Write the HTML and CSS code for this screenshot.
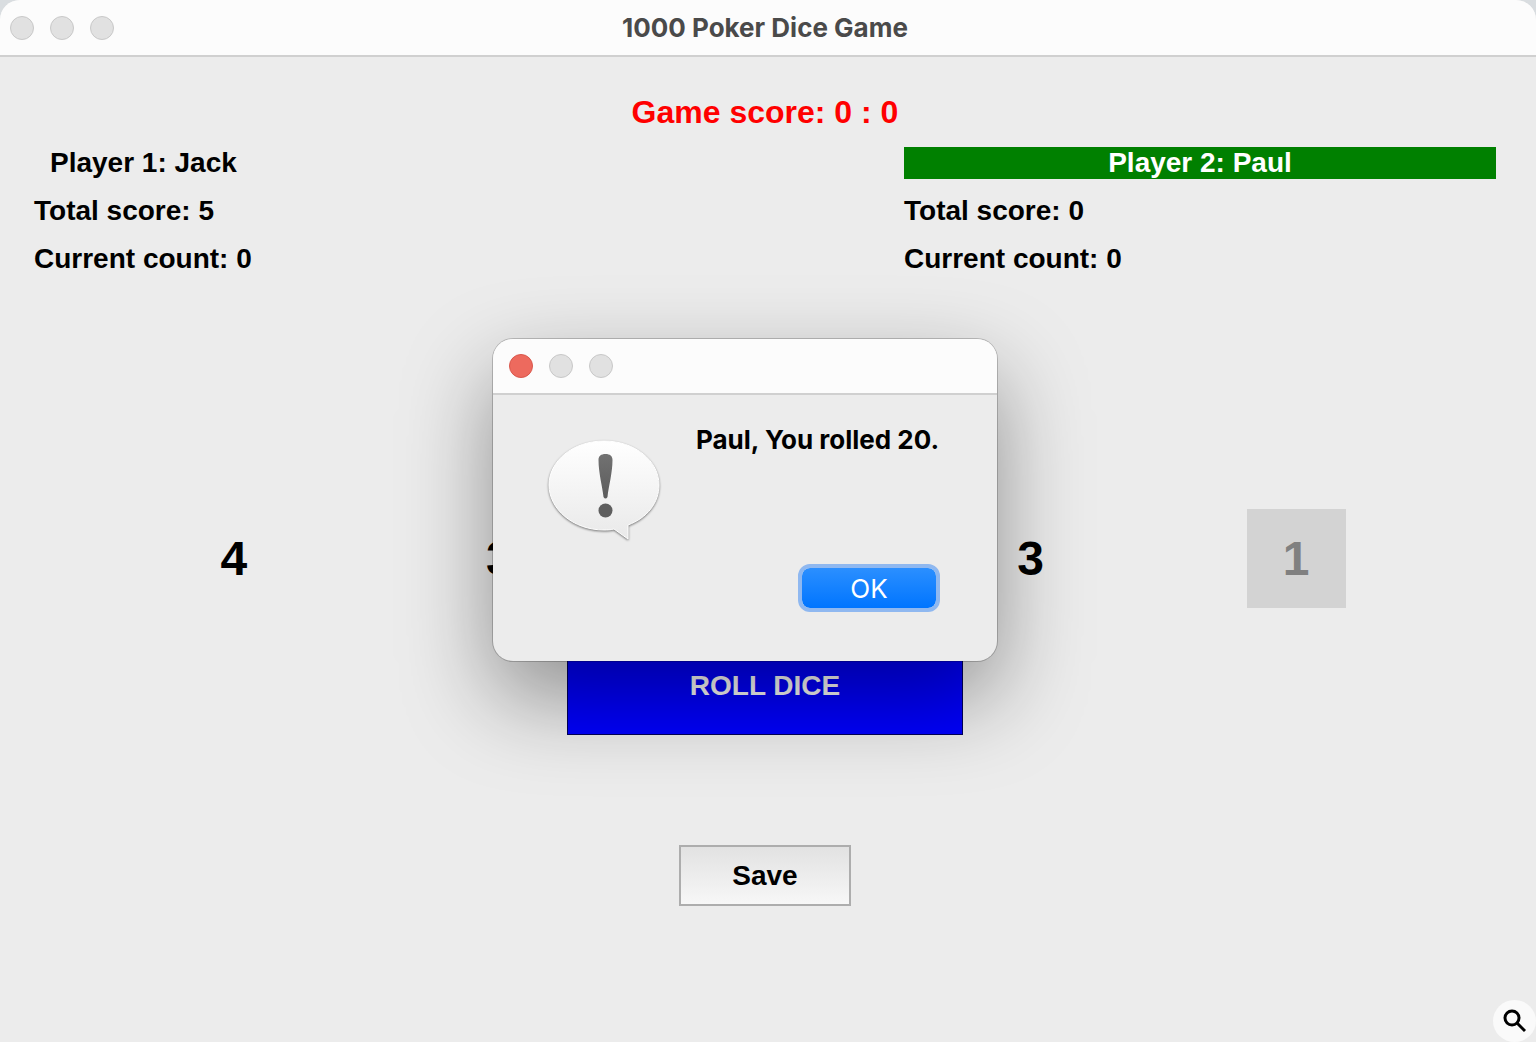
FILE: index.html
```html
<!DOCTYPE html>
<html lang="en">
<head>
  <meta charset="UTF-8" />
  <title>1000 Poker Dice Game</title>
  <link rel="stylesheet" href="styles.css">
</head>
<body>

  <div class="window">
    <!-- Title bar -->
    <header class="title-bar">
      <div class="lights">
        <span class="light"></span>
        <span class="light"></span>
        <span class="light"></span>
      </div>
      <h1>1000 Poker Dice Game</h1>
    </header>

    <main class="game">
      <p class="game-score">Game score: 0 : 0</p>

      <!-- Players -->
      <div class="players">
        <section class="player">
          <h2>Player 1: Jack</h2>
          <p>Total score: 5</p>
          <p>Current count: 0</p>
        </section>
        <section class="player active">
          <h2>Player 2: Paul</h2>
          <p>Total score: 0</p>
          <p>Current count: 0</p>
        </section>
      </div>

      <!-- Dice -->
      <div class="dice">
        <span class="die">4</span>
        <span class="die">3</span>
        <span class="die"></span>
        <span class="die">3</span>
        <span class="die used">1</span>
      </div>

      <button class="roll" type="button">ROLL DICE</button>
      <button class="save" type="button">Save</button>
    </main>
  </div>

  <!-- Message box -->
  <dialog class="message" open aria-labelledby="message-text">
    <div class="message-bar">
      <div class="lights">
        <span class="light close"></span>
        <span class="light"></span>
        <span class="light"></span>
      </div>
    </div>
    <div class="message-body">
      <svg class="bubble" viewBox="0 0 120 112" aria-hidden="true">
        <defs>
          <linearGradient id="bubbleFill" x1="0" y1="0" x2="0" y2="1">
            <stop offset="0" stop-color="#fff" />
            <stop offset="1" stop-color="#e9e9e9" />
          </linearGradient>
          <linearGradient id="markFill" x1="0" y1="0" x2="0" y2="1">
            <stop offset="0" stop-color="#727272" />
            <stop offset="1" stop-color="#5c5c5c" />
          </linearGradient>
        </defs>
        <path class="bubble-shape" fill="url(#bubbleFill)" d="M60 5C91 5 115 25 115 49C115 67 103 82 84 89L84 103L70 93C66 94 63 94 60 94C29 94 5 73 5 49C5 25 29 5 60 5Z" />
        <path fill="url(#markFill)" d="M61.500 18C66 18 68.500 20 68.500 24C68.500 37 64.500 51 63.500 61Q61.500 64 59.500 61C58.500 51 54.500 37 54.500 24C54.500 20 57 18 61.500 18Z" />
        <circle cx="61.500" cy="74.500" r="7" fill="#5e5e5e" />
      </svg>
      <p id="message-text">Paul, You rolled 20.</p>
      <button class="ok" type="button">OK</button>
    </div>
  </dialog>

  <button class="search" type="button" aria-label="Search">
    <svg viewBox="0 0 24 24" aria-hidden="true">
      <circle cx="9" cy="9" r="7" />
      <path d="M14 14L22 22" />
    </svg>
  </button>

</body>
</html>
```

FILE: styles.css
```css
html, body {
  margin: 0; padding: 0;
  background: #d9dde0;
}
body {
  position: relative;
  min-height: 100vh;
  font-family: "Liberation Sans", Arial, sans-serif;
  font-weight: bold;
  color: #000;
}
h1, h2, p {
  margin: 0;
}
button {
  font-family: inherit;
  font-weight: bold;
}
.window {
  min-height: 100vh;
  display: flex;
  flex-direction: column;
  background: #ececec;
  border-radius: 20px 20px 0 0;
  overflow: hidden;
}
.title-bar, .message-bar {
  display: flex;
  align-items: center;
  height: 55px;
  background: #fcfcfc;
  border-bottom: 2px solid #d0d0d0;
}
.title-bar {
  display: grid;
  grid-template-columns: 1fr auto 1fr;
  padding: 0 16px 0 10px;
}
.title-bar h1 {
  font-family: Inter, sans-serif;
  font-size: 26px;
  font-weight: 700;
  line-height: 32px;
  color: #4a4a4a;
}
.lights {
  display: flex;
  gap: 16px;
}
.light {
  box-sizing: border-box;
  width: 24px;
  height: 24px;
  border: 1px solid #c8c8c8;
  border-radius: 50%;
  background: #e1e1e1;
}
.light.close {
  background: #ed6a5e;
  border-color: #d9574c;
}
.game {
  flex: 1;
  display: flex;
  flex-direction: column;
  align-items: center;
  padding: 36px 40px 40px 34px;
}
.game-score {
  font-size: 32px;
  line-height: 38px;
  color: #f00;
}
.players {
  align-self: stretch;
  display: flex;
  justify-content: space-between;
  margin-top: 16px;
}
.player {
  width: 592px;
  display: grid;
  gap: 16px;
  font-size: 28px;
  line-height: 32px;
}
.player h2 {
  font-size: 28px;
  padding-left: 16px;
}
.player.active h2 {
  padding: 0;
  text-align: center;
  background: #008000;
  color: #fff;
}
.dice {
  align-self: stretch;
  display: grid;
  grid-template-columns: repeat(5, 1fr);
  justify-items: center;
  margin-top: 234px;
  padding: 0 67px;
}
.die {
  width: 99px;
  font-size: 48px;
  line-height: 99px;
  text-align: center;
}
.die.used {
  background: #d3d3d3;
  color: #808080;
}
.roll {
  width: 396px;
  height: 99px;
  margin-top: 28px;
  border: 1px solid #00005a;
  background: #00f;
  color: #fff;
  font-size: 28px;
}
.save {
  width: 172px;
  height: 61px;
  margin-top: 110px;
  border: 2px solid #adadad;
  background: linear-gradient(#e2e2e2, #f7f7f7);
  color: #000;
  font-size: 28px;
}

/* Message box over the board */
.message {
  position: absolute;
  top: 339px;
  left: calc(50% - 275px);
  box-sizing: border-box;
  width: 504px;
  margin: 0;
  padding: 0;
  border: 0;
  border-radius: 20px;
  overflow: hidden;
  background: #ececec;
  color: #000;
  box-shadow: 0 0 0 1px rgba(0,0,0,0.2), 0 36px 90px rgba(0,0,0,0.4);
}
.message-bar {
  height: 54px;
  padding: 0 16px;
}
.message-body {
  display: grid;
  grid-template-columns: 120px 1fr;
  gap: 108px 32px;
  padding: 29px 57px 49px 51px;
  font-family: Inter, sans-serif;
  font-size: 26px;
  line-height: 32px;
}
.bubble {
  grid-row: 1 / 3;
  width: 120px;
  height: 112px;
  margin-top: 12px;
}
.bubble-shape {
  stroke: #fff;
  stroke-width: 1;
  filter: drop-shadow(0 1px 1px rgba(0,0,0,0.5));
}
.ok {
  justify-self: end;
  align-self: end;
  width: 142px;
  height: 48px;
  padding: 0;
  border: 4px solid #8fb8f0;
  border-radius: 12px;
  background: linear-gradient(#2b8fff, #0075ff) padding-box;
  color: #fff;
  font-family: Inter, sans-serif;
  font-size: 26px;
  font-weight: 400;
}

.search {
  position: absolute;
  right: 0;
  bottom: 0;
  width: 43px;
  height: 42px;
  padding: 0;
  border: 0;
  border-radius: 50%;
  background: #fafafa;
}
.search svg {
  width: 24px;
  height: 24px;
  fill: none;
  stroke: #000;
  stroke-width: 3;
  vertical-align: middle;
}
```
